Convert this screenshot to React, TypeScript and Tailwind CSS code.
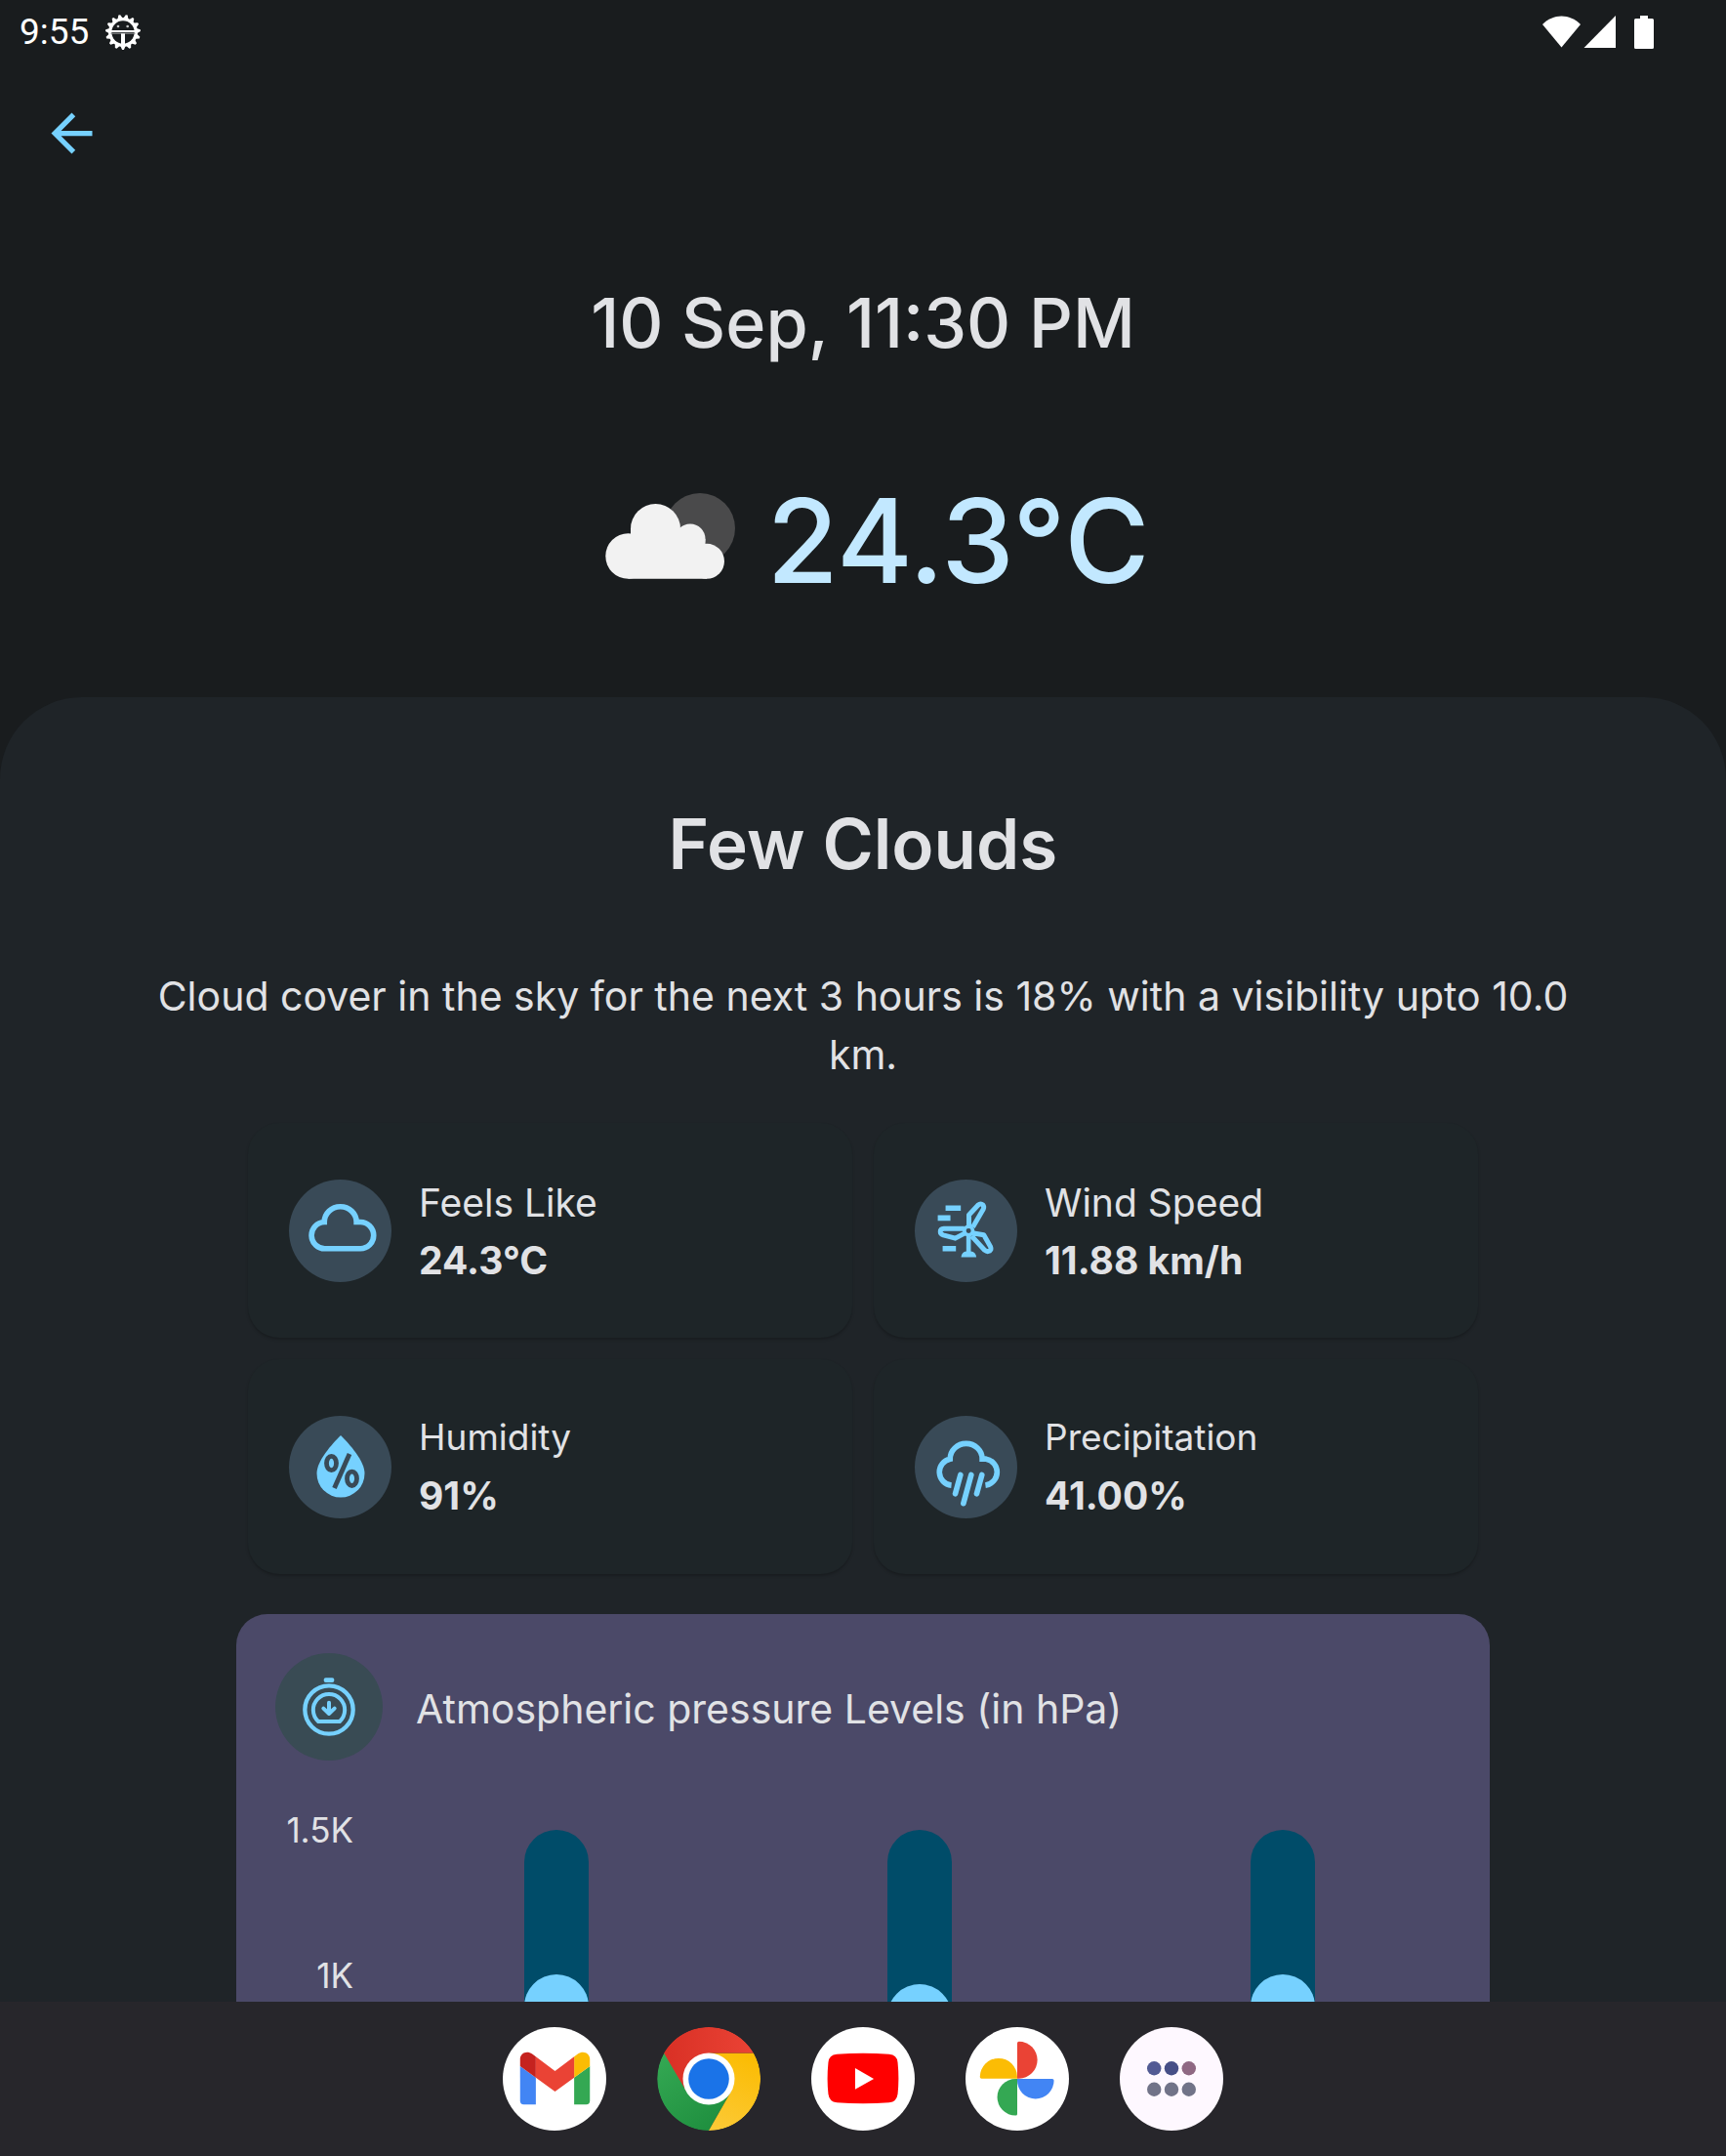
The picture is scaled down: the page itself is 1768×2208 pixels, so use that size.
import type { ReactNode } from "react";

const GEAR_POINTS = Array.from({ length: 60 }, (_, i) => {
  const phase = i % 4;
  const radius = phase === 0 || phase === 1 ? 54 : 45;
  const angle = ((i - 0.5) / 60) * Math.PI * 2 + Math.PI / 2;
  return `${(Math.cos(angle) * radius).toFixed(1)},${(Math.sin(angle) * radius).toFixed(1)}`;
}).join(" ");

function GearIcon() {
  return (
    <svg viewBox="-54 -54 108 108" className="size-9" aria-hidden="true">
      <polygon points={GEAR_POINTS} fill="#fff" />
      <circle r="35" fill="#191c1e" />
      <circle cx="-15" cy="-18" r="4" fill="#c4c5c6" />
      <circle cx="14" cy="-18" r="4" fill="#c4c5c6" />
      <path d="M-38 -6H38V0H-38Z" fill="#fff" />
      <path d="M-38 2H38V5H-38Z" fill="#9a9b9c" />
      <path d="M-6 4H6V40H-6Z" fill="#fff" />
    </svg>
  );
}

function StatusIcons() {
  return (
    <svg viewBox="1580 14 115 34" className="h-[34px] w-[115px]" fill="#fff" role="img" aria-label="Wi-Fi, signal and battery full">
      <path d="M1580 23C1591 11.500 1608 11.500 1619 23L1599.500 46.500Z" />
      <path d="M1655 14V47H1622.500Z" />
      <path d="M1680 14H1688V17H1692.500Q1694 17 1694 18.500V46.500Q1694 48 1692.500 48H1675.500Q1674 48 1674 46.500V18.500Q1674 17 1675.500 17H1680Z" />
    </svg>
  );
}

function CloudyNightIcon() {
  return (
    <svg viewBox="593 504 163 100" className="h-[100px] w-[163px] shrink-0" role="img" aria-label="Partly cloudy night">
      <circle cx="719" cy="541" r="36" fill="#4a4a4b" />
      <g fill="#f2f2f2">
        <circle cx="673.500" cy="541.500" r="25.500" />
        <circle cx="709" cy="552" r="15.500" />
        <circle cx="645.500" cy="569.500" r="23.200" />
        <circle cx="726" cy="574.800" r="18" />
        <path d="M645.500 592.700V550H648V541H699V552H724.500V560H726V592.700Z" />
      </g>
    </svg>
  );
}

function CloudIcon() {
  return (
    <svg viewBox="78 52 316 316" className="size-full" fill="none" stroke="#76d1ff" strokeWidth="17" aria-hidden="true">
      <path d="M190 265A41 41 0 0 1 187 183A49 47 0 0 1 286 183H298A41 41 0 0 1 298 265Z" />
    </svg>
  );
}

function TurbineIcon() {
  return (
    <svg viewBox="49 52 316 316" className="size-full" aria-hidden="true">
      <g fill="#76d1ff">
        <path d="M144 132H191V148H144ZM120 162H159V179H120ZM135 257H176V273H135Z" />
        <path d="M208 220H222V273Q237 274 239 291H192Q194 274 208 273Z" />
      </g>
      <g fill="none" stroke="#76d1ff" strokeWidth="15" strokeLinejoin="round">
        <path d="M216 196V161L244 131Q252 124 259 130Q264 136 260 144L228 199" />
        <path d="M202 203H139Q127 204 128 213Q128 220 137 223L174 233L204 217" />
        <path d="M226 217L262 223L282 258Q286 268 280 272Q272 276 265 270L224 226" />
        <circle cx="215" cy="210" r="13" strokeWidth="11" />
      </g>
    </svg>
  );
}

function HumidityIcon() {
  return (
    <svg viewBox="-53 -52 105 105" className="size-full" aria-hidden="true">
      <path d="M0 -32C9 -23 24.500 -6 24.500 7A24.500 24.500 0 0 1 -24.500 7C-24.500 -6 -9 -23 0 -32Z" fill="#76d1ff" />
      <g fill="none" stroke="#394a57" strokeWidth="4.800">
        <ellipse cx="-9.500" cy="-3.500" rx="5" ry="7.200" />
        <ellipse cx="11.500" cy="12.300" rx="5" ry="7.200" />
        <path d="M9 -13L-6.500 22" />
      </g>
    </svg>
  );
}

function RainIcon() {
  return (
    <svg viewBox="769 87 316 316" className="size-full" fill="none" stroke="#76d1ff" strokeWidth="17" aria-hidden="true">
      <path d="M882 301A41 41 0 0 1 878 220A49 47 0 0 1 977 220H989A41 41 0 0 1 987 301" />
      <path d="M910 269L894 327M943 269L919 357M976 269L960 327" strokeLinecap="round" />
    </svg>
  );
}

function PressureIcon() {
  return (
    <svg viewBox="33 39 330 330" className="size-full" fill="none" stroke="#76d1ff" strokeWidth="12" aria-hidden="true">
      <circle cx="198" cy="213" r="74" strokeWidth="13" />
      <path d="M165 249H231A48.500 48.500 0 1 0 165 249Z" strokeLinejoin="round" />
      <path d="M198 191V222M181 209L198 225L215 209" strokeLinecap="round" strokeLinejoin="round" />
      <rect x="182" y="115" width="32" height="14" rx="6" fill="#76d1ff" stroke="none" />
    </svg>
  );
}

function GmailIcon() {
  return (
    <svg viewBox="46 79 316 316" className="size-full" aria-hidden="true">
      <path fill="#4285f4" d="M99 198L147 233V315H110Q99 315 99 304Z" />
      <path fill="#34a853" d="M312 198L264 233V315H301Q312 315 312 304Z" />
      <path fill="#c5221f" d="M99 198V177C99 158 120 149 136 161L147 169V233Z" />
      <path fill="#fbbc04" d="M312 198V177C312 158 291 149 275 161L264 169V233Z" />
      <path fill="#ea4335" d="M147 169L205.500 213L264 169V233L205.500 276L147 233Z" />
    </svg>
  );
}

function ChromeIcon() {
  return (
    <svg viewBox="520 79 316 316" className="size-full" aria-hidden="true">
      <defs>
        <linearGradient id="chrome-red" x1="0" x2="1">
          <stop offset="0" stopColor="#d93025" />
          <stop offset="1" stopColor="#ea4335" />
        </linearGradient>
        <linearGradient id="chrome-green" x1="0.8" y1="1" x2="0.1" y2="0">
          <stop offset="0" stopColor="#1e8e3e" />
          <stop offset="1" stopColor="#34a853" />
        </linearGradient>
        <linearGradient id="chrome-yellow" x1="0.3" y1="1" x2="0.6" y2="0">
          <stop offset="0" stopColor="#fcc934" />
          <stop offset="1" stopColor="#fbbc04" />
        </linearGradient>
      </defs>
      <path fill="url(#chrome-green)" d="M542 158A158 158 0 0 0 678 395L746 276L678 237Z" />
      <path fill="url(#chrome-yellow)" d="M678 158H815A158 158 0 0 1 678 395L746 276L678 237Z" />
      <path fill="url(#chrome-red)" d="M541 158A158 158 0 0 1 815 158H678V237L610 276Z" />
      <circle cx="678" cy="237" r="79" fill="#fff" />
      <circle cx="678" cy="237" r="62" fill="#1a73e8" />
    </svg>
  );
}

function YouTubeIcon() {
  return (
    <svg viewBox="-158 -158 316 316" className="size-full" aria-hidden="true">
      <path
        fill="#f00"
        d="M-80 -75Q0 -81 80 -75Q104 -73 106 -50Q111 0 106 46Q103 70 80 72Q0 78 -80 72Q-103 70 -106 46Q-111 0 -106 -50Q-104 -73 -80 -75Z"
      />
      <path fill="#fff" d="M-24 -33L33 0L-24 32Z" />
    </svg>
  );
}

function PhotosIcon() {
  return (
    <svg viewBox="358 79 316 316" className="size-full" aria-hidden="true">
      <path fill="#ea4335" d="M516 236V128Q516 123 521 123A56.500 56.500 0 0 1 521 236Z" />
      <path fill="#fbbc04" d="M516 236H407Q402 236 402 231A57 57 0 0 1 516 231Z" />
      <path fill="#34a853" d="M516 237V344Q516 349 511 349A56 56 0 0 1 511 237Z" />
      <path fill="#4285f4" d="M516 237H623Q628 237 628 242A56 56 0 0 1 516 242Z" />
    </svg>
  );
}

function AppsIcon() {
  return (
    <svg viewBox="832 79 316 316" className="size-full" aria-hidden="true">
      <circle cx="937" cy="205" r="21.500" fill="#525b94" />
      <circle cx="990" cy="205" r="21.500" fill="#464f87" />
      <circle cx="1043" cy="205" r="21.500" fill="#8f6883" />
      <circle cx="937" cy="269" r="21.500" fill="#717388" />
      <circle cx="990" cy="269" r="21.500" fill="#717388" />
      <circle cx="1043" cy="269" r="21.500" fill="#717388" />
    </svg>
  );
}

type StatProps = { icon: ReactNode; label: string; value: string; small?: boolean };

function StatCard({ icon, label, value, small }: StatProps) {
  return (
    <div className="flex h-[220px] items-center gap-7 rounded-[32px] bg-[#1e2528] pl-[42px] shadow-[0_2px_3px_rgba(0,0,0,0.22)]">
      <div className="size-[105px] shrink-0 rounded-full bg-[#394a57]">{icon}</div>
      <dl>
        <dt className={small ? "text-[37px] leading-[60px]" : "pt-1 text-[39px] leading-[58px]"}>{label}</dt>
        <dd className="text-[39px] leading-[60px] font-bold">{value}</dd>
      </dl>
    </div>
  );
}

const MAX_PRESSURE = 1500;
const READINGS = [1005, 970, 1005];

const DOCK = [
  { name: "Gmail", icon: <GmailIcon />, tint: "bg-white" },
  { name: "Chrome", icon: <ChromeIcon />, tint: "bg-transparent" },
  { name: "YouTube", icon: <YouTubeIcon />, tint: "bg-white" },
  { name: "Photos", icon: <PhotosIcon />, tint: "bg-white" },
  { name: "All apps", icon: <AppsIcon />, tint: "bg-[#fef8ff]" },
];

export default function App() {
  return (
    <div className="flex h-screen flex-col overflow-hidden bg-[#191c1e] font-['Inter',sans-serif] font-[430] text-[#e1e2e5]">
      <main className="min-h-0 flex-1 overflow-y-auto [scrollbar-width:none]">
        <div className="flex h-[66px] items-center pr-[73px] pl-5 font-['Roboto',sans-serif] text-[37px] font-normal text-white">
          <span className="mr-[17px]">9:55</span>
          <GearIcon />
          <div className="ml-auto">
            <StatusIcons />
          </div>
        </div>

        <button type="button" aria-label="Back" className="mt-[39px] ml-[42px] block size-[63px]">
          <svg viewBox="0 0 24 24" className="size-full" fill="#76d1ff" aria-hidden="true">
            <path d="M20 11H7.830l5.590-5.590L12 4l-8 8 8 8 1.410-1.410L7.830 13H20v-2z" />
          </svg>
        </button>

        <header className="mt-[119px] pb-[100px] text-center">
          <p className="text-[70px] leading-[88px] font-[470]">10 Sep, 11:30 PM</p>
          <div className="mt-[119px] flex items-center justify-center gap-8">
            <CloudyNightIcon />
            <p className="text-[119px] leading-[120px] font-[470] text-[#c2e8ff]">24.3°C</p>
          </div>
        </header>

        <section className="rounded-t-[84px] bg-[#1f2428] pt-[106px]">
          <h1 className="text-center text-[71px] leading-[88px] font-semibold">Few Clouds</h1>
          <p className="mt-[82px] px-[136px] text-center text-[41px] leading-[60px]">
            Cloud cover in the sky for the next 3 hours is 18% with a visibility upto 10.0 km.
          </p>

          <div className="mx-auto mt-10 w-full max-w-[1284px]">
            <div className="grid grid-cols-2 gap-[22px] px-3">
              <StatCard icon={<CloudIcon />} label="Feels Like" value="24.3°C" />
              <StatCard icon={<TurbineIcon />} label="Wind Speed" value="11.88 km/h" />
              <StatCard small icon={<HumidityIcon />} label="Humidity" value="91%" />
              <StatCard small icon={<RainIcon />} label="Precipitation" value="41.00%" />
            </div>

            <div className="mt-[41px] rounded-[32px] bg-[#4b4968] pb-10">
              <div className="flex items-center gap-[34px] px-10 pt-10">
                <div className="size-[110px] shrink-0 rounded-full bg-[#394b54]">
                  <PressureIcon />
                </div>
                <h2 className="pt-1 text-[41px] leading-[60px]">Atmospheric pressure Levels (in hPa)</h2>
              </div>
              <div className="mt-[53px] flex gap-[22px] pr-[26px] pl-10">
                <div className="flex w-20 flex-col gap-[113px] text-right text-[35px] leading-9">
                  <span>1.5K</span>
                  <span>1K</span>
                </div>
                <div className="grid flex-1 grid-cols-3 justify-items-center pt-[18px]">
                  {READINGS.map((reading, i) => (
                    <div key={i} className="flex h-[448px] w-[66px] items-end rounded-full bg-[#004c69]">
                      <div className="w-full rounded-full bg-[#76d1ff]" style={{ height: `${(reading / MAX_PRESSURE) * 100}%` }} />
                    </div>
                  ))}
                </div>
              </div>
            </div>
          </div>
        </section>
      </main>

      <nav aria-label="App dock" className="flex h-[158px] shrink-0 items-center justify-center gap-[52px] bg-[#27262b]">
        {DOCK.map((app) => (
          <button key={app.name} type="button" aria-label={app.name} className={`size-[106px] overflow-hidden rounded-full ${app.tint}`}>
            {app.icon}
          </button>
        ))}
      </nav>
    </div>
  );
}
